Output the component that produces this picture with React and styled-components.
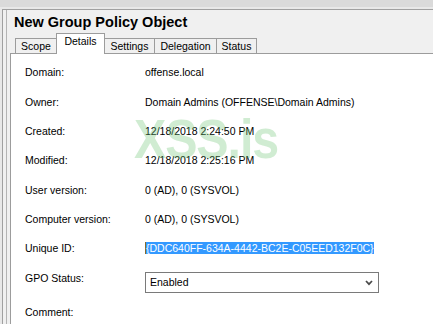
import React from "react";
import styled, { createGlobalStyle } from "styled-components";

const Global = createGlobalStyle`
  html, body { margin: 0; padding: 0; background: #dadada; }
  body { font-family: "Liberation Sans", Arial, sans-serif; }
`;

const Screen = styled.div`
  position: relative;
  width: 433px;
  height: 324px;
  overflow: hidden;
  background: #dadada;
  padding-top: 7px;
  box-sizing: border-box;
`;

const FrameEdge = styled.div`
  background: #e8e8e8;
  padding: 2px 0 0 2px;
  height: 100%;
  box-sizing: border-box;
`;

const Window = styled.div`
  background: #f0f0f0;
  border-top: 1px solid #a0a0a0;
  border-left: 1px solid #a0a0a0;
  height: 100%;
  box-sizing: border-box;
  padding-left: 3px;
`;

const Inner = styled.div`
  border-left: 1px solid #b4b4b4;
  height: 100%;
  padding-left: 3px;
  box-sizing: border-box;
`;

const Title = styled.h1`
  margin: 0;
  padding: 4px 0 0 4px;
  font-size: 14.5px;
  line-height: 16px;
  font-weight: bold;
  color: #000;
`;

const TabStrip = styled.div`
  display: flex;
  align-items: flex-end;
  height: 20px;
  margin-top: 3px;
  padding-left: 5px;
  position: relative;
  z-index: 1;
`;

const Tab = styled.div`
  box-sizing: border-box;
  width: ${(p) => p.$w}px;
  height: ${(p) => (p.$active ? 21 : 15)}px;
  margin-left: ${(p) => (p.$first ? 0 : -1)}px;
  margin-bottom: ${(p) => (p.$active ? -1 : 0)}px;
  border: 1px solid #9c9c9c;
  border-bottom: none;
  background: ${(p) => (p.$active ? "#ffffff" : "#f0f0f0")};
  position: relative;
  z-index: ${(p) => (p.$active ? 2 : 1)};
  font-size: 10.5px;
  line-height: 14px;
  text-align: center;
  color: #000;
  white-space: nowrap;
`;

const Pane = styled.div`
  background: #fff;
  border-top: 1px solid #9c9c9c;
  border-left: 1px solid #9c9c9c;
  height: 100%;
  box-sizing: border-box;
  padding: 12.4px 0 0 14px;
`;

const Row = styled.div`
  display: flex;
  align-items: flex-start;
  height: ${(p) => p.$h || 29.33}px;
  font-size: 10.5px;
  line-height: 13px;
  color: #000;
  white-space: nowrap;
`;

const Label = styled.div`
  width: 120px;
  flex: none;
`;

const Value = styled.div``;

const Selected = styled.span`
  background: #3399ff;
  color: #fff;
  border-left: 1px solid #8a6a2a;
`;

const Combo = styled.div`
  box-sizing: border-box;
  width: 234px;
  height: 21px;
  border: 1px solid #7a7a7a;
  background: #fff;
  display: flex;
  justify-content: space-between;
  padding: 3px 5px 0 4px;
  font-size: 10.5px;
  line-height: 13px;
`;

const Chevron = styled.svg`
  margin-top: 4px;
`;

const Watermark = styled.div`
  position: absolute;
  left: 134px;
  top: 108px;
  font-family: "Liberation Sans", Arial, sans-serif;
  font-weight: bold;
  font-size: 44px;
  line-height: 50px;
  color: rgba(110, 195, 115, 0.32);
  transform: scale(1.1, 1.25);
  transform-origin: left top;
  pointer-events: none;
  letter-spacing: -1px;
`;

const tabs = [
  { name: "Scope", w: 42 },
  { name: "Details", w: 49, active: true },
  { name: "Settings", w: 51 },
  { name: "Delegation", w: 63 },
  { name: "Status", w: 41 },
];

const rows = [
  ["Domain:", "offense.local"],
  ["Owner:", "Domain Admins (OFFENSE\\Domain Admins)"],
  ["Created:", "12/18/2018 2:24:50 PM"],
  ["Modified:", "12/18/2018 2:25:16 PM"],
  ["User version:", "0 (AD), 0 (SYSVOL)"],
  ["Computer version:", "0 (AD), 0 (SYSVOL)"],
];

export default function App() {
  return (
    <>
      <Global />
      <Screen>
        <FrameEdge>
          <Window>
            <Inner>
              <Title>New Group Policy Object</Title>
              <TabStrip>
                {tabs.map((t, i) => (
                  <Tab key={t.name} $w={t.w} $active={t.active} $first={i === 0}>
                    {t.name}
                  </Tab>
                ))}
              </TabStrip>
              <Pane>
                {rows.map(([l, v]) => (
                  <Row key={l}>
                    <Label>{l}</Label>
                    <Value>{v}</Value>
                  </Row>
                ))}
                <Row>
                  <Label>Unique ID:</Label>
                  <Value>
                    <Selected>{"{DDC640FF-634A-4442-BC2E-C05EED132F0C}"}</Selected>
                  </Value>
                </Row>
                <Row $h={34}>
                  <Label>GPO Status:</Label>
                  <Combo>
                    <span>Enabled</span>
                    <Chevron width="8" height="6" viewBox="0 0 8 6">
                      <polyline points="1,1 4,4.2 7,1" fill="none" stroke="#4a4a4a" strokeWidth="1.7" />
                    </Chevron>
                  </Combo>
                </Row>
                <Row>
                  <Label>Comment:</Label>
                </Row>
              </Pane>
            </Inner>
          </Window>
        </FrameEdge>
        <Watermark>XSS.is</Watermark>
      </Screen>
    </>
  );
}
